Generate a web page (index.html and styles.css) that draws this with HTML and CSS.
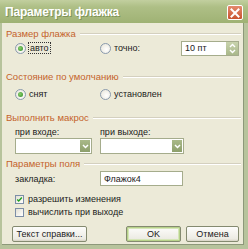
FILE: index.html
```html
<!DOCTYPE html>
<html>
<head>
<meta charset="utf-8">
<link rel="stylesheet" href="styles.css">
</head>
<body>
<div class="win">
  <div class="title">
    <span class="title-text">Параметры флажка</span>
    <div class="close">
      <svg width="10" height="10" viewBox="0 0 10 10"><path d="M1.5 1.5 L8.5 8.5 M8.5 1.5 L1.5 8.5" stroke="#fff" stroke-width="2" stroke-linecap="square"/></svg>
    </div>
  </div>
  <div class="body">
    <div class="grp g1"><span>Размер флажка</span><div class="line"></div></div>
    <div class="row r1">
      <div class="c1"><span class="radio on"></span><span class="focus">авто</span></div>
      <div class="c2"><span class="radio"></span><span>точно:</span></div>
      <div class="spin"><span class="val">10 пт</span><div class="sb"><svg width="9" height="13" viewBox="0 0 9 13"><path d="M2 5 L4.5 2.5 L7 5 M2 8 L4.5 10.5 L7 8" fill="none" stroke="#fff" stroke-width="1.4"/></svg></div></div>
    </div>
    <div class="grp g2"><span>Состояние по умолчанию</span><div class="line"></div></div>
    <div class="row r2">
      <div class="c1"><span class="radio on"></span><span>снят</span></div>
      <div class="c2"><span class="radio"></span><span>установлен</span></div>
    </div>
    <div class="grp g3"><span>Выполнить макрос</span><div class="line"></div></div>
    <div class="row r3">
      <div class="c1"><span>при входе:</span></div>
      <div class="c2"><span>при выходе:</span></div>
    </div>
    <div class="row r4">
      <div class="combo"><div class="dd"><svg width="7" height="5" viewBox="0 0 7 5"><path d="M1 1 L3.5 3.5 L6 1" fill="none" stroke="#fff" stroke-width="1.5"/></svg></div></div>
      <div class="combo"><div class="dd"><svg width="7" height="5" viewBox="0 0 7 5"><path d="M1 1 L3.5 3.5 L6 1" fill="none" stroke="#fff" stroke-width="1.5"/></svg></div></div>
    </div>
    <div class="grp g4"><span>Параметры поля</span><div class="line"></div></div>
    <div class="row r5">
      <div class="c1"><span>закладка:</span></div>
      <div class="text">Флажок4</div>
    </div>
    <div class="chk on"><span class="box"><svg width="9" height="9" viewBox="0 0 9 9"><path d="M1.5 4.5 L3.5 6.5 L7.5 2" fill="none" stroke="#21a121" stroke-width="1.8"/></svg></span><span>разрешить изменения</span></div>
    <div class="chk c2b"><span class="box"></span><span>вычислить при выходе</span></div>
    <div class="buttons">
      <div class="btn help">Текст справки...</div>
      <div class="spacer"></div>
      <div class="btn ok">OK</div>
      <div class="btn cancel">Отмена</div>
    </div>
  </div>
</div>
</body>
</html>
```

FILE: styles.css
```css
* { box-sizing: border-box; }
html, body { margin: 0; padding: 0; background: #fff; }
body { width: 248px; height: 249px; overflow: hidden; font-family: "Liberation Sans", Arial, sans-serif; font-size: 9px; color: #1a1a1a; }
.win { width: 248px; height: 249px; display: flex; flex-direction: column; background: #b7c39c; }
.title { height: 23px; display: flex; align-items: center; justify-content: space-between; padding: 0 5px 0 5px; background: linear-gradient(#c2cf9f 0%, #aebf86 30%, #9fb274 100%); }
.title-text { color: #fff; font-weight: bold; font-size: 12px; text-shadow: 1px 1px 0 #7f9358; letter-spacing: -0.2px; }
.close { width: 16px; height: 15px; margin-top: 2px; border: 1px solid #fff; border-radius: 2px; background: linear-gradient(#e48a6e, #c9532f); display: flex; align-items: center; justify-content: center; }
.body { flex: 1; margin: 0 4px 4px 2px; background: #ecead8; padding: 4px 0 0 4px; display: flex; flex-direction: column; border-right: 1px solid #8d987a; border-bottom: 1px solid #8d987a; white-space: nowrap; }
.grp { height: 13px; display: flex; align-items: center; color: #c4632b; font-size: 9.5px; margin-right: 2px; }
.grp .line { flex: 1; height: 2px; border-top: 1px solid #d4d0bf; border-bottom: 1px solid #fff; margin-left: 4px; }
.g2 { margin-top: 14px; }
.g3 { margin-top: 9px; }
.g4 { margin-top: 3px; }
.row { display: flex; align-items: center; padding-left: 9px; }
.r1 { height: 16px; }
.r2 { height: 16px; margin-top: 3px; }
.r3 { height: 12px; margin-top: 2px; }
.r4 { height: 16px; }
.r5 { height: 15px; margin-top: 1px; }
.c1 { width: 85px; display: flex; align-items: center; }
.c2 { width: 81px; display: flex; align-items: center; }
.radio { width: 11px; height: 11px; border-radius: 50%; border: 1px solid #8a9aae; background: radial-gradient(circle at 60% 60%, #fff 0%, #e6e3d6 100%); margin-right: 3px; display: inline-flex; align-items: center; justify-content: center; flex: none; }
.radio.on::after { content: ""; width: 5px; height: 5px; border-radius: 50%; background: radial-gradient(circle at 40% 40%, #8ad06e, #2d8a22); }
.focus { outline: 1px dotted #333; outline-offset: 0; padding: 0 1px; }
.spin { width: 58px; height: 15px; border: 1px solid #a5ac8c; background: #fff; display: flex; align-items: center; justify-content: space-between; padding-left: 3px; }
.sb { width: 12px; height: 13px; background: linear-gradient(#c9d3ad, #a9b88a); display: flex; align-items: center; justify-content: center; }
.combo { width: 77px; height: 16px; border: 1px solid #a5ac8c; background: #fff; display: flex; justify-content: flex-end; padding: 1px; margin-right: 8px; }
.combo + .combo { width: 84px; margin-right: 0; }
.dd { width: 10px; height: 12px; background: linear-gradient(#a9b989, #8d9f6b); display: flex; align-items: center; justify-content: center; }
.text { width: 83px; height: 15px; border: 1px solid #a5ac8c; background: #fff; display: flex; align-items: center; padding-left: 3px; }
.chk { display: flex; align-items: center; height: 12px; padding-left: 9px; }
.chk.on { margin-top: 7px; }
.c2b { margin-top: 1px; }
.box { width: 9px; height: 9px; border: 1px solid #7c8ea7; background: linear-gradient(135deg, #e2e0d4, #fff); margin-right: 4px; display: inline-flex; align-items: center; justify-content: center; flex: none; }
.buttons { display: flex; height: 16px; margin-top: 8px; padding-left: 6px; padding-right: 4px; }
.spacer { flex: 1; }
.btn { height: 16px; border: 1px solid #848a70; border-radius: 2px; background: linear-gradient(#fdfdfb, #ecebe3 85%, #d6d3c3); display: flex; align-items: center; justify-content: center; }
.help { width: 75px; }
.ok { width: 55px; box-shadow: inset 0 0 0 1px #b7d28a, inset 0 0 0 2px #d6e6b8; }
.cancel { width: 53px; margin-left: 5px; }
```
